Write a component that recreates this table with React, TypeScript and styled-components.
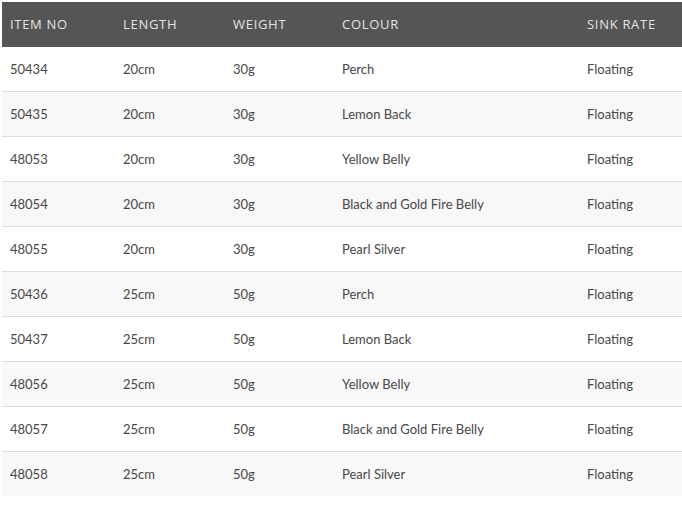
import React from "react";
import styled, { createGlobalStyle } from "styled-components";

const Global = createGlobalStyle`
  html, body { margin: 0; padding: 0; background: #fff; }
  body { padding: 2px 0 0 2px; }
`;

const Table = styled.table`
  width: 680px;
  border-collapse: collapse;
  table-layout: fixed;
  font-family: Lato, "Open Sans", sans-serif;
`;

const HeadCell = styled.th`
  height: 44px;
  padding: 0 0 0 8px;
  background: #555555;
  color: #e4e4e4;
  font-family: "Open Sans", sans-serif;
  font-weight: 400;
  font-size: 13px;
  letter-spacing: 0.7px;
  text-align: left;
  text-transform: uppercase;
`;

const Row = styled.tr<{ $alt: boolean }>`
  background: ${(p) => (p.$alt ? "#f8f8f8" : "#ffffff")};
`;

const Cell = styled.td<{ $first: boolean }>`
  height: 44px;
  padding: 0 0 0 8px;
  color: #474747;
  font-size: 13px;
  text-align: left;
  border-top: ${(p) => (p.$first ? "1px solid transparent" : "1px solid #dddddd")};
`;

const cols = [
  { label: "Item No", w: 113 },
  { label: "Length", w: 110 },
  { label: "Weight", w: 109 },
  { label: "Colour", w: 245 },
  { label: "Sink Rate", w: 103 },
];

const rows = [
  ["50434", "20cm", "30g", "Perch", "Floating"],
  ["50435", "20cm", "30g", "Lemon Back", "Floating"],
  ["48053", "20cm", "30g", "Yellow Belly", "Floating"],
  ["48054", "20cm", "30g", "Black and Gold Fire Belly", "Floating"],
  ["48055", "20cm", "30g", "Pearl Silver", "Floating"],
  ["50436", "25cm", "50g", "Perch", "Floating"],
  ["50437", "25cm", "50g", "Lemon Back", "Floating"],
  ["48056", "25cm", "50g", "Yellow Belly", "Floating"],
  ["48057", "25cm", "50g", "Black and Gold Fire Belly", "Floating"],
  ["48058", "25cm", "50g", "Pearl Silver", "Floating"],
];

export default function App() {
  return (
    <>
      <Global />
      <Table>
        <colgroup>
          {cols.map((c) => (
            <col key={c.label} style={{ width: c.w }} />
          ))}
        </colgroup>
        <thead>
          <tr>
            {cols.map((c) => (
              <HeadCell key={c.label}>{c.label}</HeadCell>
            ))}
          </tr>
        </thead>
        <tbody>
          {rows.map((r, i) => (
            <Row key={r[0]} $alt={i % 2 === 1}>
              {r.map((v, j) => (
                <Cell key={j} $first={i === 0}>
                  {v}
                </Cell>
              ))}
            </Row>
          ))}
        </tbody>
      </Table>
    </>
  );
}
